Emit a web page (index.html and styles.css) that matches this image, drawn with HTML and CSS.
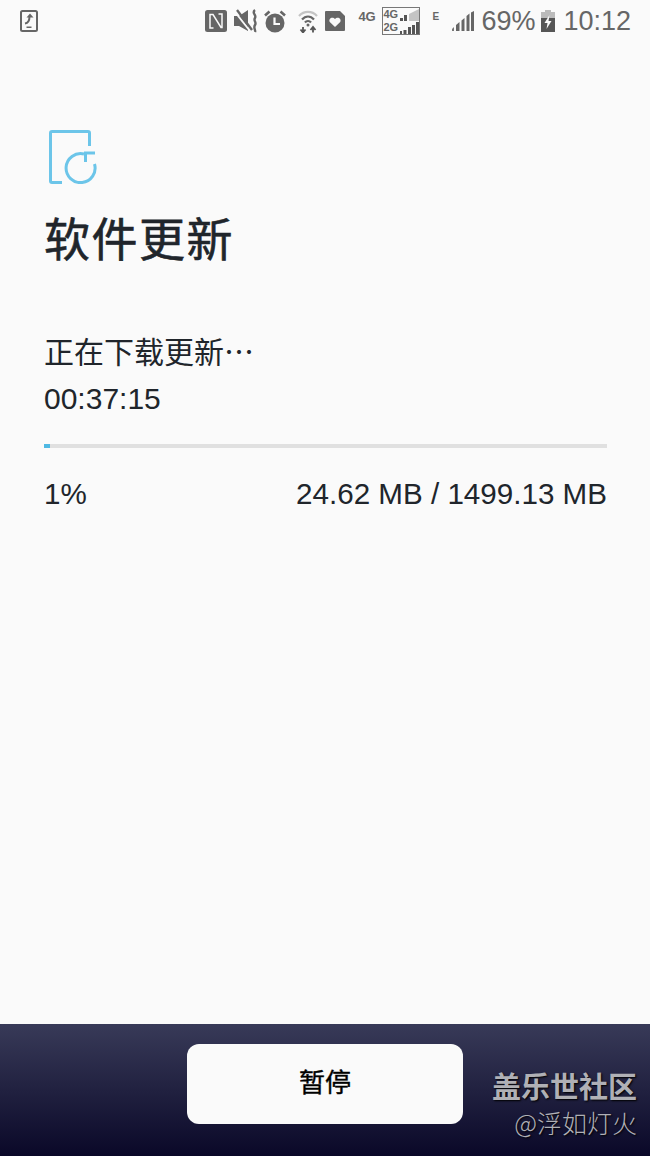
FILE: index.html
```html
<!DOCTYPE html>
<html lang="zh-CN">
<head>
    <meta charset="UTF-8">
    <meta name="viewport" content="width=device-width, initial-scale=1.0">
    <title>软件更新</title>
    <link rel="stylesheet" href="styles.css">
</head>
<body>

    <div class="status-bar">
        <svg class="ic-tablet" width="18" height="22" viewBox="0 0 18 22">
            <rect x="1" y="1" width="16" height="20" rx="1.5" fill="none" stroke="#666" stroke-width="2"/>
            <path d="M5 13.500 C8 13 9.500 11 9.500 6.500" fill="none" stroke="#666" stroke-width="2"/>
            <path d="M6.500 7.500 L10 3.500 L13.500 7.500 Z" fill="#666"/>
            <rect x="6.500" y="16.500" width="5" height="1.500" fill="#666"/>
        </svg>
        <div class="status-right">
            <svg class="ic-nfc" width="22" height="22" viewBox="0 0 22 22">
                <rect width="22" height="22" rx="2.500" fill="#666"/>
                <path d="M8.500 18 H5 V4.500 H8 L16 17.500 H17 V4 H13.500" fill="none" stroke="#fafafa" stroke-width="1.500"/>
            </svg>
            <svg class="ic-mute" width="24" height="24" viewBox="0 0 24 24">
                <path d="M0 7 H5 L14 1 V22 L5 17 H0 Z" fill="#666"/>
                <path d="M1 3 L16 22" stroke="#fafafa" stroke-width="2"/>
                <path d="M3 1 L18 21" stroke="#666" stroke-width="2.400"/>
                <path d="M21 1 C17 4 23 6 21 9 C19 12 23 13 21 16 C19 19 22 21 21 23" fill="none" stroke="#666" stroke-width="2.400"/>
            </svg>
            <svg class="ic-alarm" width="22" height="23" viewBox="0 0 22 23">
                <circle cx="11" cy="13" r="9.500" fill="#666"/>
                <path d="M10.500 7.500 V14 H16" fill="none" stroke="#fafafa" stroke-width="2.200"/>
                <path d="M1 5.500 L5.500 1.500 M21 5.500 L16.500 1.500" stroke="#666" stroke-width="2.600"/>
            </svg>
            <svg class="ic-wifi" width="20" height="23" viewBox="0 0 20 23">
                <path d="M1 6 C6 0.500 14 0.500 19 6" fill="none" stroke="#c4c4c4" stroke-width="2.200"/>
                <path d="M4 9.500 C7.500 5.500 12.500 5.500 16 9.500" fill="none" stroke="#666" stroke-width="2.200"/>
                <path d="M7 12.500 C8.500 10.500 11.500 10.500 13 12.500" fill="none" stroke="#666" stroke-width="2.200"/>
                <circle cx="10" cy="15" r="1.500" fill="#666"/>
                <path d="M5 17 V22.500 M2.500 19.500 L5 22.500 L7.500 19.500 M15 22.500 V17 M12.500 20 L15 17 L17.500 20" fill="none" stroke="#555" stroke-width="1.800"/>
            </svg>
            <svg class="ic-sim" width="20" height="20" viewBox="0 0 20 20">
                <path d="M1 0 H15 L20 5 V19 Q20 20 19 20 H1 Q0 20 0 19 V1 Q0 0 1 0 Z" fill="#666"/>
                <path d="M10 16 L4.800 11 C3 7.500 7.500 5 10 8 C12.500 5 17 7.500 15.200 11 Z" fill="#fafafa"/>
            </svg>
            <span class="net-4g">4G</span>
            <div class="net-box">
                <div class="net-row">
                    <span>4G</span>
                    <svg width="19" height="12" viewBox="0 0 19 12">
                        <rect x="0" y="9" width="3" height="3" fill="#555"/>
                        <rect x="4" y="6" width="3" height="6" fill="#555"/>
                        <path d="M9 12 V5 L19 0 V12 Z" fill="#c4c4c4"/>
                    </svg>
                </div>
                <div class="net-row">
                    <span>2G</span>
                    <svg width="19" height="12" viewBox="0 0 19 12">
                        <rect x="0" y="9" width="2" height="3" fill="#555"/>
                        <rect x="3.500" y="8" width="3" height="4" fill="#555"/>
                        <rect x="8" y="5" width="3" height="7" fill="#555"/>
                        <rect x="12" y="3" width="3" height="9" fill="#555"/>
                        <rect x="16" y="0" width="3" height="12" fill="#555"/>
                    </svg>
                </div>
            </div>
            <span class="net-e">E</span>
            <svg class="ic-signal" width="22" height="20" viewBox="0 0 22 20">
                <path d="M0 20 V18 L2 16 V20 Z" fill="#777"/>
                <path d="M4 20 V14 L7.500 11 V20 Z" fill="#666"/>
                <path d="M9.500 20 V9.500 L12.500 7 V20 Z" fill="#666"/>
                <path d="M14.500 20 V5 L17.500 2.500 V20 Z" fill="#666"/>
                <path d="M19 20 V1.500 L22 0 V20 Z" fill="#666"/>
            </svg>
            <span class="batt-text">69%</span>
            <svg class="ic-battery" width="14" height="22" viewBox="0 0 14 22">
                <rect x="4" y="0" width="6" height="2" fill="#bbb"/>
                <rect x="0" y="2" width="14" height="20" fill="#bbb"/>
                <rect x="0" y="8" width="14" height="14" fill="#555"/>
                <path d="M8.500 5 L3.500 13 H6.500 L5.500 19 L10.500 11 H7.500 Z" fill="#fafafa"/>
            </svg>
            <span class="clock">10:12</span>
        </div>
    </div>

    <div class="content">
        <svg class="update-icon" width="48" height="54" viewBox="0 0 48 54">
            <path d="M13 52.500 H3 Q1.500 52.500 1.500 51 V3 Q1.500 1.500 3 1.500 H39 Q40.500 1.500 40.500 3 V16" fill="none" stroke="#6cc5e9" stroke-width="3"/>
            <path d="M35 24 A14.500 14.500 0 1 0 45.500 34" fill="none" stroke="#6cc5e9" stroke-width="3"/>
            <path d="M46 23 H36.500 V32" fill="none" stroke="#6cc5e9" stroke-width="3"/>
        </svg>
        <h1 class="title">软件更新</h1>
        <div class="message">正在下载更新…</div>
        <div class="timer">00:37:15</div>
        <div class="progress"><div class="progress-fill" style="width: 1%"></div></div>
        <div class="progress-info">
            <span>1%</span>
            <span>24.62 MB / 1499.13 MB</span>
        </div>
    </div>

    <div class="bottom-bar">
        <button class="pause">暂停</button>
        <div class="watermark">
            <div class="wm-name">盖乐世社区</div>
            <div class="wm-user">@浮如灯火</div>
        </div>
    </div>

</body>
</html>
```

FILE: styles.css
```css
body {
    font-family: "Liberation Sans", "Noto Sans CJK SC", sans-serif;
    background-color: #fafafa;
    color: #20252b;
    margin: 0;
    height: 1156px;
    display: flex;
    flex-direction: column;
    overflow: hidden;
}
.status-bar {
    height: 42px;
    padding: 0 19px 0 20px;
    display: flex;
    justify-content: space-between;
    align-items: center;
    color: #666;
}
.status-right {
    display: flex;
    align-items: center;
}
.ic-mute { margin-left: 7px; }
.ic-alarm { margin-left: 6px; }
.ic-wifi { margin-left: 12px; }
.ic-sim { margin-left: 7px; }
.net-4g {
    font-size: 13px;
    font-weight: 700;
    margin-left: 13px;
    margin-bottom: 10px;
    width: 18px;
}
.net-box {
    margin-left: 6px;
    width: 38px;
    height: 28px;
    box-sizing: border-box;
    border: 1px solid #777;
    display: flex;
    flex-direction: column;
    justify-content: space-between;
}
.net-row {
    display: flex;
    justify-content: space-between;
    align-items: flex-end;
    height: 13px;
    font-size: 11px;
    line-height: 13px;
    font-weight: 700;
}
.net-e {
    font-size: 10px;
    font-weight: 700;
    margin-left: 12px;
    margin-bottom: 10px;
    width: 8px;
}
.ic-signal { margin-left: 12px; }
.batt-text {
    font-size: 27px;
    margin-left: 7px;
}
.ic-battery { margin-left: 6px; }
.clock {
    font-size: 27px;
    margin-left: 8px;
}
.content {
    flex: 1;
    padding: 88px 43px 0 44px;
}
.update-icon {
    display: block;
    margin-left: 5px;
}
.title {
    font-family: "Noto Sans CJK SC", sans-serif;
    font-size: 46px;
    line-height: 60px;
    font-weight: 400;
    -webkit-text-stroke: 0.6px #20252b;
    margin: 22px 0 0 0;
    letter-spacing: 1.5px;
}
.message {
    font-family: "Noto Sans CJK SC", sans-serif;
    font-size: 30px;
    line-height: 40px;
    margin-top: 64px;
}
.timer {
    font-size: 30px;
    line-height: 40px;
    margin-top: 9px;
}
.progress {
    height: 4px;
    background-color: #e0e0e0;
    margin-top: 25px;
}
.progress-fill {
    height: 100%;
    background-color: #4fb9e3;
}
.progress-info {
    display: flex;
    justify-content: space-between;
    font-size: 29.6px;
    line-height: 40px;
    margin-top: 26px;
}
.bottom-bar {
    height: 132px;
    position: relative;
    background: linear-gradient(#383a58, #0a0828);
    display: flex;
    justify-content: center;
    padding-top: 20px;
    box-sizing: border-box;
}
.pause {
    width: 276px;
    height: 80px;
    padding-bottom: 8px;
    background-color: #fafafa;
    color: #000;
    border: none;
    border-radius: 12px;
    font-family: "Noto Sans CJK SC", sans-serif;
    font-size: 26px;
    font-weight: 400;
    -webkit-text-stroke: 0.4px #000;
}
.watermark {
    position: absolute;
    right: 13px;
    top: 42px;
    text-align: right;
    font-family: "Noto Sans CJK SC", sans-serif;
    color: #b0b0b6;
    text-shadow: 1px 1px 2px #000;
}
.wm-name {
    font-size: 29px;
    line-height: 38px;
    font-weight: 700;
}
.wm-user {
    font-size: 25px;
    line-height: 36px;
    font-weight: 300;
}
```
